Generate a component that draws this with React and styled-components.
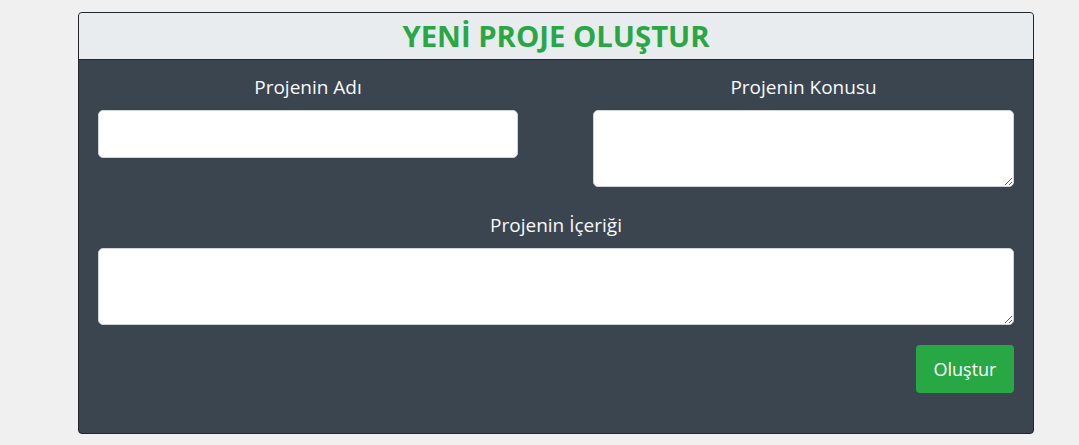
import React from "react";
import styled, { createGlobalStyle } from "styled-components";

const GlobalStyle = createGlobalStyle`
  body {
    margin: 0;
    background-color: #f0f0f0;
    font-family: "Open Sans", "Noto Sans", sans-serif;
  }
`;

const Page = styled.div`
  padding: 12px 0 0 78px;
  height: 445px;
  box-sizing: border-box;
`;

const Card = styled.div`
  width: 956px;
  height: 422px;
  box-sizing: border-box;
  border: 1px solid #23272b;
  border-radius: 4px;
  background-color: #3a4550;
  overflow: hidden;
`;

const Header = styled.div`
  background-color: #e9ecef;
  border-bottom: 1px solid #23272b;
  height: 46px;
  display: flex;
  align-items: center;
  justify-content: center;

  h2 {
    margin: 0;
    color: #28a745;
    font-size: 29.3px;
    font-weight: 700;
  }
`;

const Body = styled.div`
  padding: 15px 19px 0 19px;
`;

const Row = styled.div`
  display: grid;
  grid-template-columns: ${(p) => (p.split ? "420px 421px" : "1fr")};
  justify-content: space-between;
  margin-bottom: ${(p) => p.mb || 0}px;
`;

const Field = styled.div`
  display: flex;
  flex-direction: column;
`;

const Label = styled.label`
  color: #f8f9fa;
  font-size: 19px;
  text-align: center;
  line-height: 24px;
  margin-bottom: 11px;
`;

const Input = styled.input`
  height: 48px;
  box-sizing: border-box;
  border: 1px solid #ced4da;
  border-radius: 5px;
  background: #fff;
  font-size: 16px;
  padding: 6px 12px;
  outline: none;
`;

const TextArea = styled.textarea`
  height: 77px;
  box-sizing: border-box;
  border: 1px solid #ced4da;
  border-radius: 5px;
  background: #fff;
  font-size: 16px;
  padding: 6px 12px;
  outline: none;
  resize: vertical;
  font-family: inherit;
`;

const Actions = styled.div`
  display: flex;
  justify-content: flex-end;
  margin-top: 20px;
`;

const Button = styled.button`
  background-color: #28a745;
  color: #fff;
  border: none;
  border-radius: 4px;
  width: 98px;
  height: 48px;
  font-size: 18px;
  font-family: inherit;
  cursor: pointer;
`;

export default function App() {
  return (
    <>
      <GlobalStyle />
      <Page>
        <Card>
          <Header>
            <h2>YENİ PROJE OLUŞTUR</h2>
          </Header>
          <Body>
            <Row split mb={26}>
              <Field>
                <Label>Projenin Adı</Label>
                <Input type="text" />
              </Field>
              <Field>
                <Label>Projenin Konusu</Label>
                <TextArea />
              </Field>
            </Row>
            <Row>
              <Field>
                <Label>Projenin İçeriği</Label>
                <TextArea />
              </Field>
            </Row>
            <Actions>
              <Button>Oluştur</Button>
            </Actions>
          </Body>
        </Card>
      </Page>
    </>
  );
}
